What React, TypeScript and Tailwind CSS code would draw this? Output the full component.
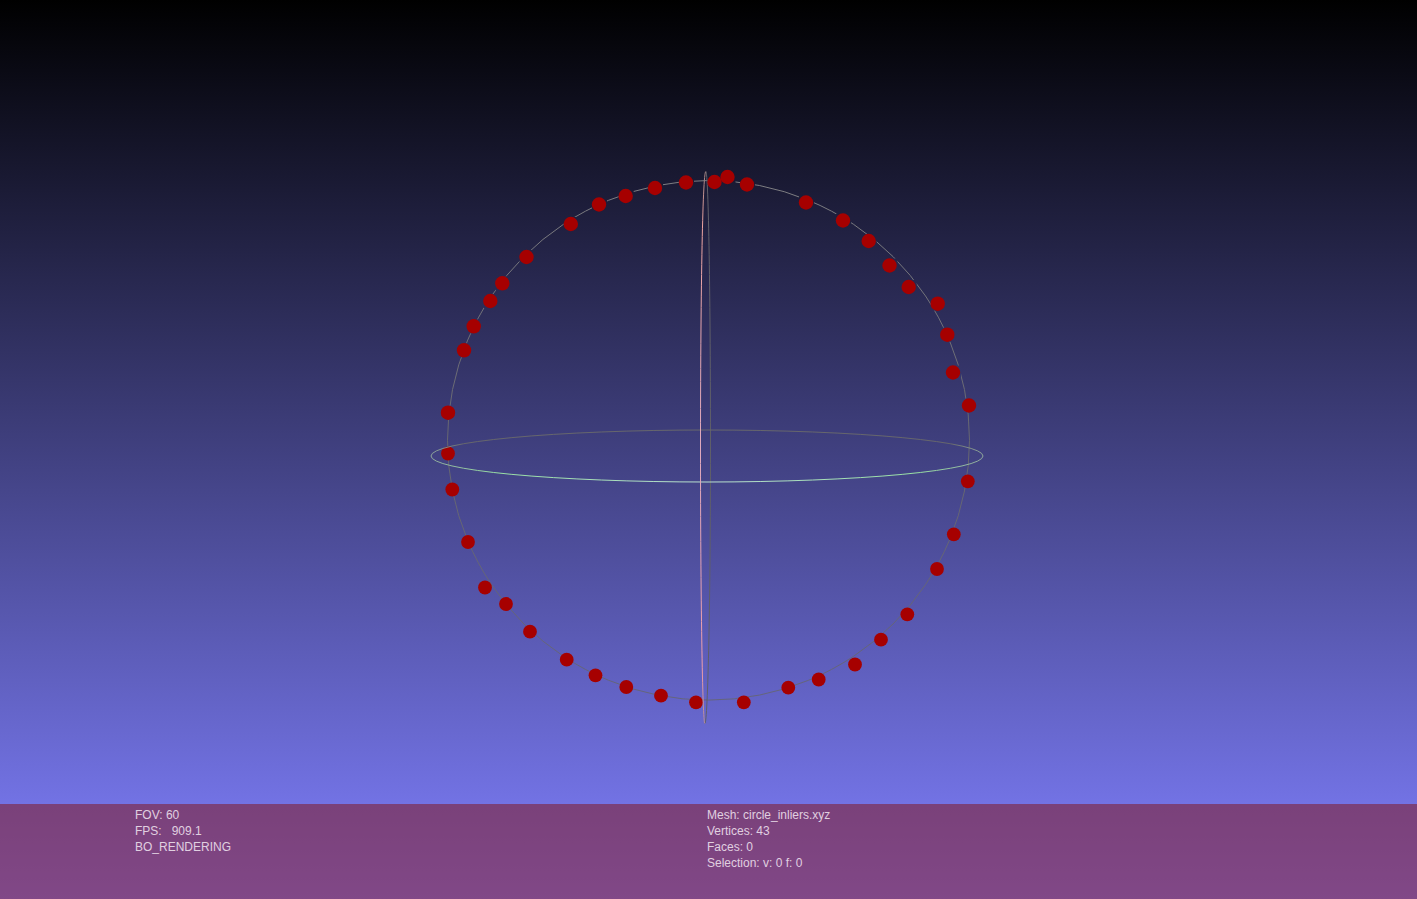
import React from "react";

type Point = [number, number];

// Points on the near half hide the orbit circle behind their square sprites.
const upperPoints: Point[] = [
  [686, 182.5], [714.5, 182], [727.5, 177], [747, 184.5], [806, 202.5],
  [843, 220.5], [868.7, 241], [889.5, 265.5], [908.7, 287], [937.7, 303.7],
  [947.3, 334.7], [953, 372.5], [969, 405.5], [655, 188], [625.7, 196],
  [599, 204.5], [570.8, 224], [526.5, 257], [502.3, 283.3], [490.3, 301],
  [473.7, 326.3], [464, 350.3], [448, 412.7],
];

const lowerPoints: Point[] = [
  [448, 453.5], [452.3, 489.5], [468, 542], [485, 587.5], [506, 604],
  [530, 631.7], [566.7, 659.7], [595.5, 675.3], [626.3, 687], [661, 695.7],
  [696, 702.3], [743.8, 702.3], [788.3, 687.7], [818.7, 679.5], [855, 664.5],
  [881, 639.7], [907.3, 614.3], [937, 569], [953.8, 534.3], [967.8, 481.3],
];

function Viewport() {
  return (
    <svg
      viewBox="0 0 1417 804"
      role="img"
      aria-label="Point cloud with trackball"
      className="block min-h-0 w-full flex-1"
    >
      <defs>
        <linearGradient id="green" x1="431" x2="983" y1="0" y2="0" gradientUnits="userSpaceOnUse">
          <stop offset="0" stopColor="#8fa89c" />
          <stop offset="0.12" stopColor="#98e0a4" />
          <stop offset="0.5" stopColor="#b9dfd0" />
          <stop offset="0.88" stopColor="#98e0a4" />
          <stop offset="1" stopColor="#8fa89c" />
        </linearGradient>
        <linearGradient id="far" x1="431" x2="983" y1="0" y2="0" gradientUnits="userSpaceOnUse">
          <stop offset="0" stopColor="#8fa89c" />
          <stop offset="0.06" stopColor="#66666c" />
          <stop offset="0.94" stopColor="#66666c" />
          <stop offset="1" stopColor="#8fa89c" />
        </linearGradient>
        <linearGradient id="red" x1="0" x2="0" y1="171" y2="724" gradientUnits="userSpaceOnUse">
          <stop offset="0" stopColor="#a08282" />
          <stop offset="0.1" stopColor="#eda3a0" />
          <stop offset="0.5" stopColor="#dfa9bd" />
          <stop offset="0.9" stopColor="#ee9da9" />
          <stop offset="1" stopColor="#b08a98" />
        </linearGradient>
        <linearGradient id="orbit" x1="0" x2="0" y1="180" y2="700" gradientUnits="userSpaceOnUse">
          <stop offset="0" stopColor="#7e7e82" />
          <stop offset="0.5" stopColor="#666670" />
          <stop offset="1" stopColor="#65657a" />
        </linearGradient>
        <mask id="sprites" maskUnits="userSpaceOnUse" x="0" y="0" width="1417" height="804">
          <rect width="1417" height="804" fill="white" />
          {upperPoints.map(([x, y]) => (
            <rect key={`${x}-${y}`} x={x - 7} y={y - 7} width="15" height="14" fill="black" />
          ))}
        </mask>
      </defs>
      <g fill="none" strokeWidth="1">
        <ellipse cx="708.5" cy="440.3" rx="261" ry="259.8" stroke="url(#orbit)" mask="url(#sprites)" />
        <path d="M705.8 171.5C708.5 172 710.5 300 710.5 450C710.5 595 708 723 704.8 723.5" stroke="#5f5f68" />
      </g>
      <g fill="#a60000">
        {upperPoints.map(([x, y]) => (
          <circle key={`${x}-${y}`} cx={x} cy={y} r="7.2" />
        ))}
        {lowerPoints.map(([x, y]) => (
          <circle key={`${x}-${y}`} cx={x} cy={y} r="6.9" />
        ))}
      </g>
      <g fill="none" strokeWidth="1">
        <path d="M431 456A276 26 0 0 1 983 456" stroke="url(#far)" />
        <path d="M431 456A276 26 0 0 0 983 456" stroke="url(#green)" />
        <path d="M705.8 171.5C702.5 172 700.5 300 700.5 450C700.5 595 702.5 723 704.8 723.5" stroke="url(#red)" />
      </g>
    </svg>
  );
}

export default function App() {
  return (
    <main className="flex h-screen flex-col bg-linear-[to_bottom,#000000,#8080ff] font-['Liberation_Sans',Arial,sans-serif]">
      <Viewport />
      <footer className="grid h-[95px] shrink-0 grid-cols-[572fr_710fr] bg-[#821010]/50 pt-[3px] pl-[135px] text-[12px] leading-4 text-[#e0d0e0]">
        <div>
          <p>FOV: 60</p>
          <p className="whitespace-pre">FPS:   909.1</p>
          <p>BO_RENDERING</p>
        </div>
        <div>
          <p>Mesh: circle_inliers.xyz</p>
          <p>Vertices: 43</p>
          <p>Faces: 0</p>
          <p>Selection: v: 0 f: 0</p>
        </div>
      </footer>
    </main>
  );
}
